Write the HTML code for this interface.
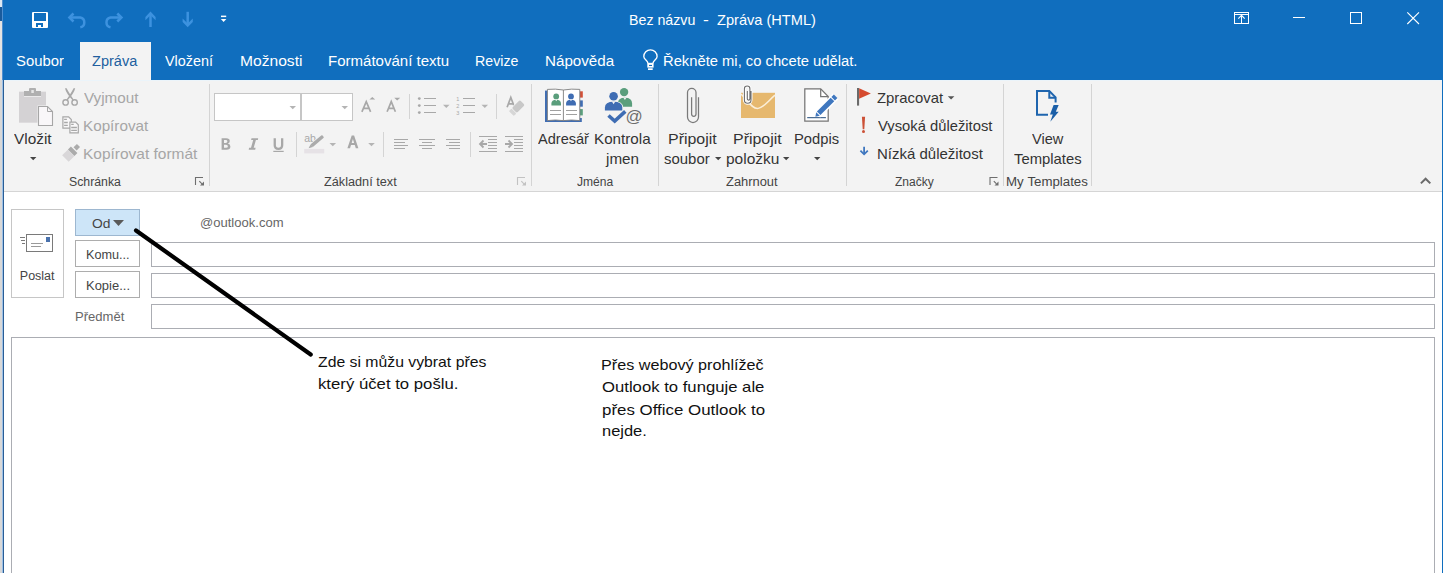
<!DOCTYPE html>
<html><head><meta charset="utf-8"><style>
html,body{margin:0;padding:0;width:1443px;height:573px;overflow:hidden;background:#fff;position:relative;font-family:"Liberation Sans",sans-serif}
.t{position:absolute;white-space:pre;transform-origin:0 0;font-family:"Liberation Sans",sans-serif}
.r{position:absolute;box-sizing:border-box}
svg{position:absolute;left:0;top:0}
</style></head><body>
<div class="r" style="left:0;top:0;width:1443px;height:80px;background:#106ebe"></div>
<div class="r" style="left:0;top:0;width:2px;height:573px;background:#d8d8d8"></div>
<div class="r" style="left:0;top:0;width:2px;height:7px;background:#dde8f3"></div>
<div class="r" style="left:0;top:7px;width:2px;height:14px;background:#1a5b9c"></div>
<div class="r" style="left:0;top:21px;width:2px;height:59px;background:#e6e4e2"></div>
<div class="r" style="left:2px;top:0;width:1px;height:80px;background:#4f8fd0"></div>
<div class="r" style="left:2px;top:80px;width:1px;height:493px;background:#9cc0e6"></div>
<div class="r" style="left:3px;top:80px;width:1px;height:493px;background:#2a5d94"></div>
<div class="r" style="left:1442px;top:0;width:1px;height:573px;background:#106ebe"></div>
<div class="r" style="left:4px;top:80px;width:1438px;height:111px;background:#f3f3f3"></div>
<div class="r" style="left:80px;top:42px;width:71px;height:38px;background:#f3f3f3"></div>
<div class="r" style="left:4px;top:80px;width:1438px;height:1px;background:#ebf4fa"></div>
<div class="r" style="left:4px;top:191px;width:1438px;height:1px;background:#d5d5d5"></div>
<svg width="1443" height="573" viewBox="0 0 1443 573">
<!-- QAT -->
<rect x="32" y="12" width="16" height="16" rx="1" fill="#fff"/>
<rect x="34" y="13" width="12" height="8" fill="#106ebe"/>
<rect x="36" y="23" width="7" height="4" fill="#106ebe"/>
<rect x="38" y="25" width="3" height="3" fill="#fff"/>
<g fill="none" stroke="#3d92df" stroke-width="2.5">
<path d="M70 17.5 H80.3 A5 5 0 0 1 80.3 27.3"/>
<path d="M120.8 17.5 H110.5 A5 5 0 0 0 110.5 27.3"/>
<path d="M150.5 27 V15"/>
<path d="M187.7 11.8 V24"/>
</g>
<g fill="#3d92df">
<path d="M67.6 17.5 L72.6 12.6 L74.4 14.4 L71.3 17.5 L74.4 20.6 L72.6 22.4 Z"/>
<path d="M123.2 17.5 L118.2 12.6 L116.4 14.4 L119.5 17.5 L116.4 20.6 L118.2 22.4 Z"/>
<path d="M150.5 11.6 L145.4 16.9 L145.4 20.3 L150.5 15.2 L155.6 20.3 L155.6 16.9 Z"/>
<path d="M187.7 27.2 L182.6 21.9 L182.6 18.5 L187.7 23.6 L192.8 18.5 L192.8 21.9 Z"/>
</g>
<rect x="221" y="15.6" width="5.2" height="1.5" fill="#fff"/>
<path d="M220.8 19 H226.4 L223.6 22 Z" fill="#fff"/>
<!-- window controls -->
<g fill="none" stroke="#fff" stroke-width="1" shape-rendering="crispEdges">
<rect x="1234.5" y="12.5" width="14" height="11"/>
<path d="M1234.5 14.5 H1248.5"/>
<path d="M1241.5 15 V24"/>
<path d="M1293 17.5 H1305"/>
<rect x="1350.5" y="12.5" width="11" height="11"/>
</g>
<g fill="none" stroke="#fff" stroke-width="1.1">
<path d="M1238.3 18.6 L1241.5 15.4 L1244.7 18.6"/>
<path d="M1407.3 12.3 L1419 24 M1419 12.3 L1407.3 24"/>
</g>
<!-- lightbulb -->
<path d="M647.9 63.2 C647.9 60.3 643.8 59.6 643.8 56.5 A6.65 6.65 0 0 1 657.1 56.5 C657.1 59.6 653 60.3 653 63.2" fill="none" stroke="#fff" stroke-width="1.35"/>
<rect x="647.3" y="62.8" width="6.3" height="4.8" fill="#fff"/>
<rect x="649" y="64.9" width="3" height="1.1" fill="#106ebe"/>
<rect x="648" y="68.3" width="4.7" height="1.7" fill="#fff"/>
<!-- group separators -->
<g fill="#d4d4d4" shape-rendering="crispEdges">
<rect x="209" y="84" width="1" height="102"/>
<rect x="531" y="84" width="1" height="102"/>
<rect x="658" y="84" width="1" height="102"/>
<rect x="846" y="84" width="1" height="102"/>
<rect x="1003" y="84" width="1" height="102"/>
<rect x="1091" y="84" width="1" height="102"/>
<rect x="409" y="94" width="1" height="25"/>
<rect x="496" y="94" width="1" height="25"/>
<rect x="296" y="132" width="1" height="25"/>
<rect x="383" y="132" width="1" height="25"/>
<rect x="470" y="132" width="1" height="25"/>
</g>
<!-- paste -->
<rect x="19" y="91.7" width="27" height="31" fill="#d4d2d4"/>
<rect x="24" y="91" width="17" height="5" fill="#b0b0b0"/>
<rect x="29" y="88" width="7" height="4" rx="1" fill="#b0b0b0"/>
<rect x="31.3" y="90" width="2.5" height="3" fill="#e6e6e6"/>
<rect x="24" y="96" width="17" height="1" fill="#ebeaeb"/>
<path d="M37.5 105.5 H48 L53.5 111 V126.5 H37.5 Z" fill="#f3f3f3"/>
<path d="M38.5 106.5 H47.5 L52.5 111.5 V125.5 H38.5 Z" fill="#f9f7f9" stroke="#a6a6a6" stroke-width="1.1"/>
<path d="M47.5 106.5 V111.5 H52.5" fill="none" stroke="#a6a6a6" stroke-width="1"/>
<path d="M30 157 H36.4 L33.2 160.2 Z" fill="#444"/>
<!-- scissors -->
<g fill="none" stroke="#a8a8a8" stroke-width="1.4">
<circle cx="65.6" cy="102.4" r="2.7"/>
<circle cx="74.6" cy="102.4" r="2.7"/>
</g>
<path d="M65 88.2 Q66 93 72.6 100.3 L73.6 99.6 Q68.5 92 66.6 88.2 Z" fill="#a8a8a8"/>
<path d="M75.2 88.2 Q74.2 93 67.6 100.3 L66.6 99.6 Q71.7 92 73.6 88.2 Z" fill="#a8a8a8"/>
<!-- copy -->
<g fill="#f9f8f9" stroke="#a8a8a8" stroke-width="1.2">
<path d="M62.9 116.9 H68.6 L71.3 119.6 V128.1 H62.9 Z"/>
<path d="M69.9 122.1 H75.6 L78.3 124.8 V132.8 H69.9 Z"/>
</g>
<g stroke="#a8a8a8" stroke-width="1.3">
<path d="M64.1 119.4 H66.9 M64.1 122.5 H67.8 M64.1 125.4 H67.8 M71.2 124.4 H73.7 M71.2 127.5 H76.9 M71.2 130.4 H76.9"/>
</g>
<!-- format painter -->
<g transform="translate(71.4 152.6) rotate(-45)">
<rect x="-8.5" y="-4.6" width="8" height="9.2" fill="#d9d7d9"/>
<rect x="-0.3" y="-4.6" width="4.2" height="9.2" fill="#ababab"/>
<rect x="5.2" y="-2.2" width="4.8" height="4.4" fill="#ababab"/>
</g>
<!-- launchers -->
<path d="M195.5 185 V177.5 H203" fill="none" stroke="#6e6e6e" stroke-width="1.1"/>
<path d="M199.3 181.2 L202 183.9" fill="none" stroke="#6e6e6e" stroke-width="1.1"/>
<path d="M200 185.6 H204 V181.6 Z" fill="#6e6e6e"/>
<path d="M517.5 185 V177.5 H525" fill="none" stroke="#c2c2c2" stroke-width="1.1"/>
<path d="M521.3 181.2 L524 183.9" fill="none" stroke="#c2c2c2" stroke-width="1.1"/>
<path d="M522 185.6 H526 V181.6 Z" fill="#c2c2c2"/>
<path d="M990.0 185 V177.5 H997.5" fill="none" stroke="#6e6e6e" stroke-width="1.1"/>
<path d="M993.8 181.2 L996.5 183.9" fill="none" stroke="#6e6e6e" stroke-width="1.1"/>
<path d="M994.5 185.6 H998.5 V181.6 Z" fill="#6e6e6e"/>
<!-- font boxes -->
<g fill="#fff" stroke="#c6c6c6" stroke-width="1" shape-rendering="crispEdges">
<rect x="214.5" y="93.5" width="86" height="27"/>
<rect x="301.5" y="93.5" width="51" height="27"/>
</g>
<g fill="#b4b4b4">
<path d="M289.5 106 H296 L292.75 109.2 Z"/>
<path d="M341.5 106 H348 L344.75 109.2 Z"/>
<path d="M443 104.8 H449.6 L446.3 108 Z"/>
<path d="M481.5 104.8 H488.1 L484.8 108 Z"/>
<path d="M329.5 143 H336.1 L332.8 146.2 Z"/>
<path d="M368.2 143 H374.8 L371.5 146.2 Z"/>
</g>
<!-- grow/shrink font -->
<g fill="none" stroke="#a8a8a8" stroke-width="1.7">
<path d="M361.9 111.8 L366.25 101.6 L370.6 111.8 M363.4 108.3 H369.1"/>
<path d="M387.1 111.8 L391.25 101.6 L395.4 111.8 M388.6 108.3 H393.9"/>
</g>
<path d="M369.4 99.6 L372.3 96.9 L375.2 99.6 Z" fill="#a8a8a8"/>
<path d="M394.2 97.8 H400.2 L397.2 100.5 Z" fill="#a8a8a8"/>
<!-- bullets -->
<g fill="#a8a8a8">
<circle cx="419.3" cy="98.6" r="1.4"/><circle cx="419.3" cy="105.6" r="1.4"/><circle cx="419.3" cy="112.6" r="1.4"/>
</g>
<g stroke="#a8a8a8" stroke-width="1" shape-rendering="crispEdges">
<path d="M424 98.5 H436 M424 105.5 H436 M424 112.5 H436"/>
<path d="M463 98.5 H475 M463 105.5 H475 M463 112.5 H475"/>
</g>
<g font-family="Liberation Sans" fill="#a8a8a8" font-size="5.5">
<text x="456.3" y="101">1</text><text x="456.3" y="108">2</text><text x="456.3" y="115">3</text>
</g>
<!-- clear formatting -->
<path d="M507.1 107.3 L510.8 97.4 L514.5 107.3 M508.3 103.8 H513.2" fill="none" stroke="#a8a8a8" stroke-width="1.7"/>
<g transform="translate(511.3 113.6) rotate(-45)">
<rect x="-0.8" y="-4.3" width="17.2" height="8.6" rx="1.8" fill="#f3f3f3"/>
<rect x="4.3" y="-3.5" width="11.3" height="7" rx="1.4" fill="#c8c8c8"/>
<rect x="0" y="-3.5" width="3.7" height="7" rx="1" fill="#d6d6d6"/>
</g>
<!-- B I U -->
<path d="M221.6 138.2 H226.2 Q229.8 138.2 229.8 141 Q229.8 143.1 227.8 143.6 Q230.4 144.1 230.4 146.5 Q230.4 149.7 226.4 149.7 H221.6 Z M224 140.1 V142.9 H225.7 Q227.4 142.9 227.4 141.5 Q227.4 140.1 225.7 140.1 Z M224 144.7 V147.8 H226 Q227.9 147.8 227.9 146.25 Q227.9 144.7 226 144.7 Z" fill="#a8a8a8" fill-rule="evenodd"/>
<path d="M273.6 138.2 H275.9 V145 Q275.9 147.8 278.45 147.8 Q281 147.8 281 145 V138.2 H283.3 V145.2 Q283.3 149.9 278.45 149.9 Q273.6 149.9 273.6 145.2 Z" fill="#a8a8a8"/>
<path d="M251.5 138.3 H258.2 L257.8 140.1 H255.9 L253.7 147.8 H255.6 L255.2 149.7 H248.7 L249.1 147.8 H251 L253.2 140.1 H251.1 Z" fill="#a8a8a8"/>
<rect x="273.3" y="150.8" width="10.4" height="1.2" fill="#a8a8a8"/>
<!-- highlighter -->
<text x="304.2" y="142" font-family="Liberation Sans" font-size="10.5" fill="#a8a8a8">ab</text>
<rect x="304.2" y="148.9" width="20" height="4.5" fill="#e6e2e6"/>
<g transform="rotate(-40 310 147)">
<rect x="311" y="144.6" width="16" height="4.8" rx="1" fill="#f3f3f3"/>
<rect x="312" y="145.4" width="15" height="3.4" rx="1" fill="#ababab"/>
<path d="M308 147.1 L312.3 145.4 V148.8 Z" fill="#ababab"/>
</g>
<!-- font color -->
<path d="M347.4 148.3 L351.7 135.6 H354.1 L358.4 148.3 H355.8 L354.8 145.1 H351 L350 148.3 Z M351.7 142.9 H354.1 L352.9 139 Z" fill="#a8a8a8" fill-rule="evenodd"/>
<!-- align -->
<g stroke="#a8a8a8" stroke-width="1" shape-rendering="crispEdges">
<path d="M394 139.5 H408 M394 142.5 H405 M394 145.5 H408 M394 148.5 H405"/>
<path d="M419 139.5 H435 M422 142.5 H432 M419 145.5 H435 M422 148.5 H432"/>
<path d="M446 139.5 H460 M449 142.5 H460 M446 145.5 H460 M449 148.5 H460"/>
<path d="M479 136.5 H497 M488 139.5 H497 M488 142.5 H497 M488 145.5 H497 M488 148.5 H497 M479 151.5 H497"/>
<path d="M505 136.5 H523 M514 139.5 H523 M514 142.5 H523 M514 145.5 H523 M514 148.5 H523 M505 151.5 H523"/>
</g>
<g fill="none" stroke="#a8a8a8" stroke-width="1.8">
<path d="M480 144 H487 M483.5 140.5 L480 144 L483.5 147.5"/>
<path d="M505 144 H512 M508.5 140.5 L512 144 L508.5 147.5"/>
</g>
<!-- address book -->
<rect x="545" y="90.6" width="36.8" height="31.4" fill="#3f6db3"/>
<rect x="579.5" y="90" width="4" height="28" fill="#f3f3f3"/>
<rect x="580" y="91.3" width="2.8" height="6.3" fill="#d24f36"/>
<rect x="580" y="100.4" width="2.8" height="6.3" fill="#3f6db3"/>
<rect x="580" y="109.1" width="2.8" height="6.3" fill="#5a9e7c"/>
<path d="M547.4 89.4 Q555.4 88.6 563.4 90 Q571.4 88.6 579.8 89.4 V120.6 Q571.4 119.4 563.4 120.6 Q555.4 119.4 547.4 120.6 Z" fill="#fff" stroke="#7d7d7d" stroke-width="0.9"/>
<path d="M563.4 90 V120.6" stroke="#7d7d7d" stroke-width="0.9"/>
<circle cx="556.2" cy="96.4" r="2.9" fill="#5a9e7c"/>
<path d="M551.4 105.4 V103.6 Q551.4 99.7 556.2 99.7 Q561 99.7 561 103.6 V105.4 Z" fill="#5a9e7c"/>
<path d="M555.1 99.6 H557.3 L556.2 101.3 Z" fill="#fff"/>
<circle cx="571" cy="96.4" r="2.9" fill="#3f6db3"/>
<path d="M566.1 105.4 V103.6 Q566.1 99.7 571 99.7 Q575.9 99.7 575.9 103.6 V105.4 Z" fill="#3f6db3"/>
<path d="M569.9 99.6 H572.1 L571 101.3 Z" fill="#fff"/>
<g stroke="#a0a0a0" stroke-width="1" shape-rendering="crispEdges">
<path d="M550 110.5 H561 M550 114.5 H561 M566 110.5 H577 M566 114.5 H577"/>
</g>
<!-- check names -->
<circle cx="624.1" cy="92.1" r="4.2" fill="#5a9e7c"/>
<path d="M617.8 106.7 V103.5 Q617.8 97.8 624.9 97.8 Q632.1 97.8 632.1 103.5 V106.7 Z" fill="#5a9e7c"/>
<path d="M623.4 97.7 H626.4 L624.9 100 Z" fill="#f3f3f3"/>
<circle cx="613.6" cy="96.3" r="5" fill="#f3f3f3"/>
<circle cx="613.6" cy="96.3" r="4.3" fill="#3f6db3"/>
<path d="M604.1 111.2 V107.6 Q604.1 100.9 613.6 100.9 Q623.1 100.9 623.1 107.6 V111.2 Z" fill="#f3f3f3"/>
<path d="M604.9 110.5 V107.5 Q604.9 101.7 613.6 101.7 Q622.3 101.7 622.3 107.5 V110.5 Z" fill="#3f6db3"/>
<path d="M611.9 101.6 H615.3 L613.6 104.2 Z" fill="#f3f3f3"/>
<path d="M607.8 114.9 L614.7 121 L626 110.8" fill="none" stroke="#f3f3f3" stroke-width="5"/>
<path d="M608.5 115.5 L614.7 121 L625.3 111.3" fill="none" stroke="#3f6db3" stroke-width="3.6"/>
<text x="625.5" y="121.5" font-family="Liberation Sans" font-size="17" fill="#6e6e6e">@</text>
<!-- paperclip -->
<path d="M691.6 97.2 V114.1 A2.2 2.2 0 0 0 696 114.1 V92.6 A4.25 4.25 0 0 0 687.5 92.6 V117 A5.5 5.5 0 0 0 698.5 117 V97.2" fill="none" stroke="#7a7a7a" stroke-width="1.25"/>
<!-- envelope attach -->
<rect x="741" y="92.8" width="34" height="25.2" fill="#e6b86e"/>
<path d="M741 94 C748 101 752 108.5 757.6 108.5 C763 108.5 768 101 775 95.2" fill="none" stroke="#fbeed8" stroke-width="1.6"/>
<path d="M747.3 91 V98.8 A1.3 1.3 0 0 0 749.9 98.8 V88.8 A2.75 2.75 0 0 0 744.4 88.8 V100 A3.3 3.3 0 0 0 751 100 V91" fill="none" stroke="#fff" stroke-width="3"/>
<path d="M747.3 91 V98.8 A1.3 1.3 0 0 0 749.9 98.8 V88.8 A2.75 2.75 0 0 0 744.4 88.8 V100 A3.3 3.3 0 0 0 751 100 V91" fill="none" stroke="#6e6e6e" stroke-width="1.1"/>
<!-- signature -->
<path d="M804.8 88.9 H820.7 L828.2 96.6 V121.2 H804.8 Z" fill="#fff" stroke="#757575" stroke-width="1.25"/>
<path d="M820.7 88.9 V96.6 H828.2" fill="none" stroke="#757575" stroke-width="1.25"/>
<path d="M807.2 117.6 H825.9" stroke="#4b6d94" stroke-width="1.25"/>
<g transform="rotate(-45 815.5 116.5)">
<rect x="818" y="112.5" width="26" height="8" fill="#fff"/>
<path d="M815.3 116.5 L819 114 V119 Z" fill="#3f77bf"/>
<rect x="820" y="114" width="19.5" height="5" fill="#3f77bf"/>
<rect x="840.5" y="114" width="3.5" height="5" fill="#3f77bf"/>
</g>
<!-- flag -->
<rect x="857" y="88" width="2.1" height="17.6" fill="#6a6a6a"/>
<path d="M859.1 88.2 L870.9 93.5 L859.1 98.8 Z" fill="#d54a2e"/>
<path d="M861.9 116.8 H865.1 L864.3 129.3 H862.7 Z" fill="#cc5136"/>
<circle cx="863.5" cy="131.5" r="1.5" fill="#cc5136"/>
<path d="M864.1 146.8 V153.8" fill="none" stroke="#3f77bf" stroke-width="1.8"/>
<path d="M860.4 150.7 L864.1 154.3 L867.8 150.7" fill="none" stroke="#3f77bf" stroke-width="1.8"/>
<!-- Zpracovat arrow -->
<path d="M947.8 96.3 H954.4 L951.1 99.5 Z" fill="#555"/>
<!-- dropdown arrows attach -->
<path d="M715 157 H721.4 L718.2 160.2 Z" fill="#444"/>
<path d="M783 157 H789.4 L786.2 160.2 Z" fill="#444"/>
<path d="M814 157 H820.4 L817.2 160.2 Z" fill="#444"/>
<!-- view templates -->
<path d="M1048 114.8 H1037 V91.1 H1049.3 L1055.6 97.4 V102.5" fill="none" stroke="#1f65ae" stroke-width="2"/>
<path d="M1049.3 91.1 V97.8 H1055.6" fill="none" stroke="#1f65ae" stroke-width="2"/>
<path d="M1053.2 104 H1060 L1057.2 110.8 H1060 L1049.5 123 L1051.8 115.5 H1048.8 Z" fill="#f3f3f3"/>
<path d="M1053.6 105 H1058.7 L1055.8 111.7 H1058.7 L1050.3 121.7 L1052.8 114.5 H1050 Z" fill="#1a5fa8"/>
<!-- collapse caret -->
<path d="M1420.9 183.4 L1425.6 178.7 L1430.3 183.4" fill="none" stroke="#6a6a6a" stroke-width="2"/>
<!-- compose -->
<g fill="none" shape-rendering="crispEdges" stroke-width="1">
<rect x="11.5" y="209.5" width="52" height="88" stroke="#c6c6c6"/>
<rect x="75.5" y="209.5" width="64" height="26" fill="#cde5f8" stroke="#9db7d0"/>
<rect x="75.5" y="240.5" width="64" height="26" stroke="#adadad"/>
<rect x="75.5" y="271.5" width="64" height="26" stroke="#adadad"/>
<rect x="151.5" y="242.5" width="1283" height="24" stroke="#abadb3"/>
<rect x="151.5" y="273.5" width="1283" height="24" stroke="#abadb3"/>
<rect x="151.5" y="304.5" width="1283" height="24" stroke="#abadb3"/>
<rect x="11.5" y="337.5" width="1423" height="300" stroke="#abadb3"/>
<rect x="26.5" y="234.5" width="26" height="17" stroke="#7a7a7a"/>
<path d="M31 243.5 H43 M31 246.5 H41" stroke="#9a9a9a"/>
<path d="M20 237.5 H25 M21 240.5 H25 M22 243.5 H25" stroke="#7a7a7a"/>
</g>
<rect x="46" y="237" width="4" height="5" fill="#4a72ad"/>
<path d="M113 220 H124 L118.5 226 Z" fill="#5a5a5a"/>
<line x1="136" y1="230.5" x2="310.7" y2="354.5" stroke="#000" stroke-width="4.2" stroke-linecap="round"/>
</svg>

<span class="t" style="left:628.65px;top:12.00px;font-size:15px;line-height:15px;color:#ffffff;transform:scaleX(0.9471)">Bez&nbsp;názvu</span><span class="t" style="left:702.73px;top:12.00px;font-size:15px;line-height:15px;color:#ffffff;transform:scaleX(1.1667)">-</span><span class="t" style="left:717.30px;top:12.00px;font-size:15px;line-height:15px;color:#ffffff;transform:scaleX(0.9723)">Zpráva&nbsp;(HTML)</span><span class="t" style="left:16.34px;top:53.00px;font-size:15.5px;line-height:15.5px;color:#ffffff;transform:scaleX(0.9592)">Soubor</span><span class="t" style="left:165.30px;top:53.00px;font-size:15.5px;line-height:15.5px;color:#ffffff;transform:scaleX(0.9269)">Vložení</span><span class="t" style="left:240.09px;top:53.00px;font-size:15.5px;line-height:15.5px;color:#ffffff;transform:scaleX(1.0067)">Možnosti</span><span class="t" style="left:328.23px;top:53.00px;font-size:15.5px;line-height:15.5px;color:#ffffff;transform:scaleX(0.9691)">Formátování&nbsp;textu</span><span class="t" style="left:475.28px;top:53.00px;font-size:15.5px;line-height:15.5px;color:#ffffff;transform:scaleX(0.9152)">Revize</span><span class="t" style="left:545.02px;top:53.00px;font-size:15.5px;line-height:15.5px;color:#ffffff;transform:scaleX(0.9786)">Nápověda</span><span class="t" style="left:92.00px;top:53.00px;font-size:15.5px;line-height:15.5px;color:#215f9f;transform:scaleX(0.9375)">Zpráva</span><span class="t" style="left:663.35px;top:53.00px;font-size:15.5px;line-height:15.5px;color:#ffffff;transform:scaleX(0.9520)">Řekněte&nbsp;mi,&nbsp;co&nbsp;chcete&nbsp;udělat.</span><span class="t" style="left:14.00px;top:131.00px;font-size:15px;line-height:15px;color:#333333;transform:scaleX(1.0243)">Vložit</span><span class="t" style="left:84.10px;top:90.00px;font-size:15px;line-height:15px;color:#a6a6a6;transform:scaleX(1.0167)">Vyjmout</span><span class="t" style="left:83.28px;top:118.00px;font-size:15px;line-height:15px;color:#a6a6a6;transform:scaleX(1.0159)">Kopírovat</span><span class="t" style="left:83.27px;top:146.00px;font-size:15px;line-height:15px;color:#a6a6a6;transform:scaleX(1.0309)">Kopírovat&nbsp;formát</span><span class="t" style="left:69.32px;top:176.00px;font-size:12.5px;line-height:12.5px;color:#444444;transform:scaleX(0.9827)">Schránka</span><span class="t" style="left:324.40px;top:176.00px;font-size:12.5px;line-height:12.5px;color:#444444;transform:scaleX(1.0155)">Základní&nbsp;text</span><span class="t" style="left:538.40px;top:131.00px;font-size:15px;line-height:15px;color:#333333;transform:scaleX(0.9698)">Adresář</span><span class="t" style="left:593.59px;top:131.00px;font-size:15px;line-height:15px;color:#333333;transform:scaleX(1.0127)">Kontrola</span><span class="t" style="left:605.80px;top:151.00px;font-size:15px;line-height:15px;color:#333333;transform:scaleX(1.0156)">jmen</span><span class="t" style="left:576.50px;top:176.00px;font-size:12.5px;line-height:12.5px;color:#444444;transform:scaleX(0.9649)">Jména</span><span class="t" style="left:667.94px;top:131.00px;font-size:15px;line-height:15px;color:#333333;transform:scaleX(1.0622)">Připojit</span><span class="t" style="left:664.40px;top:151.00px;font-size:15px;line-height:15px;color:#333333;transform:scaleX(0.9956)">soubor</span><span class="t" style="left:733.14px;top:131.00px;font-size:15px;line-height:15px;color:#333333;transform:scaleX(1.0622)">Připojit</span><span class="t" style="left:725.77px;top:151.00px;font-size:15px;line-height:15px;color:#333333;transform:scaleX(1.0320)">položku</span><span class="t" style="left:794.42px;top:131.00px;font-size:15px;line-height:15px;color:#333333;transform:scaleX(0.9818)">Podpis</span><span class="t" style="left:726.20px;top:176.00px;font-size:12.5px;line-height:12.5px;color:#444444;transform:scaleX(1.0320)">Zahrnout</span><span class="t" style="left:877.30px;top:90.00px;font-size:15px;line-height:15px;color:#333333;transform:scaleX(0.9910)">Zpracovat</span><span class="t" style="left:877.70px;top:118.00px;font-size:15px;line-height:15px;color:#333333;transform:scaleX(0.9845)">Vysoká&nbsp;důležitost</span><span class="t" style="left:877.00px;top:146.00px;font-size:15px;line-height:15px;color:#333333;transform:scaleX(1.0000)">Nízká&nbsp;důležitost</span><span class="t" style="left:895.20px;top:176.00px;font-size:12.5px;line-height:12.5px;color:#444444;transform:scaleX(0.9625)">Značky</span><span class="t" style="left:1031.60px;top:131.00px;font-size:15px;line-height:15px;color:#333333;transform:scaleX(0.9719)">View</span><span class="t" style="left:1013.50px;top:151.00px;font-size:15px;line-height:15px;color:#333333;transform:scaleX(0.9897)">Templates</span><span class="t" style="left:1006.04px;top:176.00px;font-size:12.5px;line-height:12.5px;color:#444444;transform:scaleX(1.0618)">My&nbsp;Templates</span><span class="t" style="left:19.80px;top:270.00px;font-size:12.5px;line-height:12.5px;color:#444444;transform:scaleX(1.0000)">Poslat</span><span class="t" style="left:91.59px;top:218.00px;font-size:12.5px;line-height:12.5px;color:#444444;transform:scaleX(1.1067)">Od</span><span class="t" style="left:199.76px;top:217.00px;font-size:12.5px;line-height:12.5px;color:#666666;transform:scaleX(1.0430)">@outlook.com</span><span class="t" style="left:85.69px;top:249.00px;font-size:12.5px;line-height:12.5px;color:#444444;transform:scaleX(1.0122)">Komu...</span><span class="t" style="left:85.66px;top:280.00px;font-size:12.5px;line-height:12.5px;color:#444444;transform:scaleX(1.0375)">Kopie...</span><span class="t" style="left:74.86px;top:311.00px;font-size:12.5px;line-height:12.5px;color:#666666;transform:scaleX(1.0435)">Předmět</span><span class="t" style="left:318.10px;top:355.00px;font-size:14.3px;line-height:14.3px;color:#111111;transform:scaleX(1.1033)">Zde&nbsp;si&nbsp;můžu&nbsp;vybrat&nbsp;přes</span><span class="t" style="left:318.23px;top:377.00px;font-size:14.3px;line-height:14.3px;color:#111111;transform:scaleX(1.1703)">který&nbsp;účet&nbsp;to&nbsp;pošlu.</span><span class="t" style="left:601.37px;top:358.00px;font-size:14.3px;line-height:14.3px;color:#111111;transform:scaleX(1.1310)">Přes&nbsp;webový&nbsp;prohlížeč</span><span class="t" style="left:602.13px;top:380.00px;font-size:14.3px;line-height:14.3px;color:#111111;transform:scaleX(1.1674)">Outlook&nbsp;to&nbsp;funguje&nbsp;ale</span><span class="t" style="left:602.12px;top:403.00px;font-size:14.3px;line-height:14.3px;color:#111111;transform:scaleX(1.1816)">přes&nbsp;Office&nbsp;Outlook&nbsp;to</span><span class="t" style="left:602.15px;top:424.00px;font-size:14.3px;line-height:14.3px;color:#111111;transform:scaleX(1.1514)">nejde.</span>
</body></html>
